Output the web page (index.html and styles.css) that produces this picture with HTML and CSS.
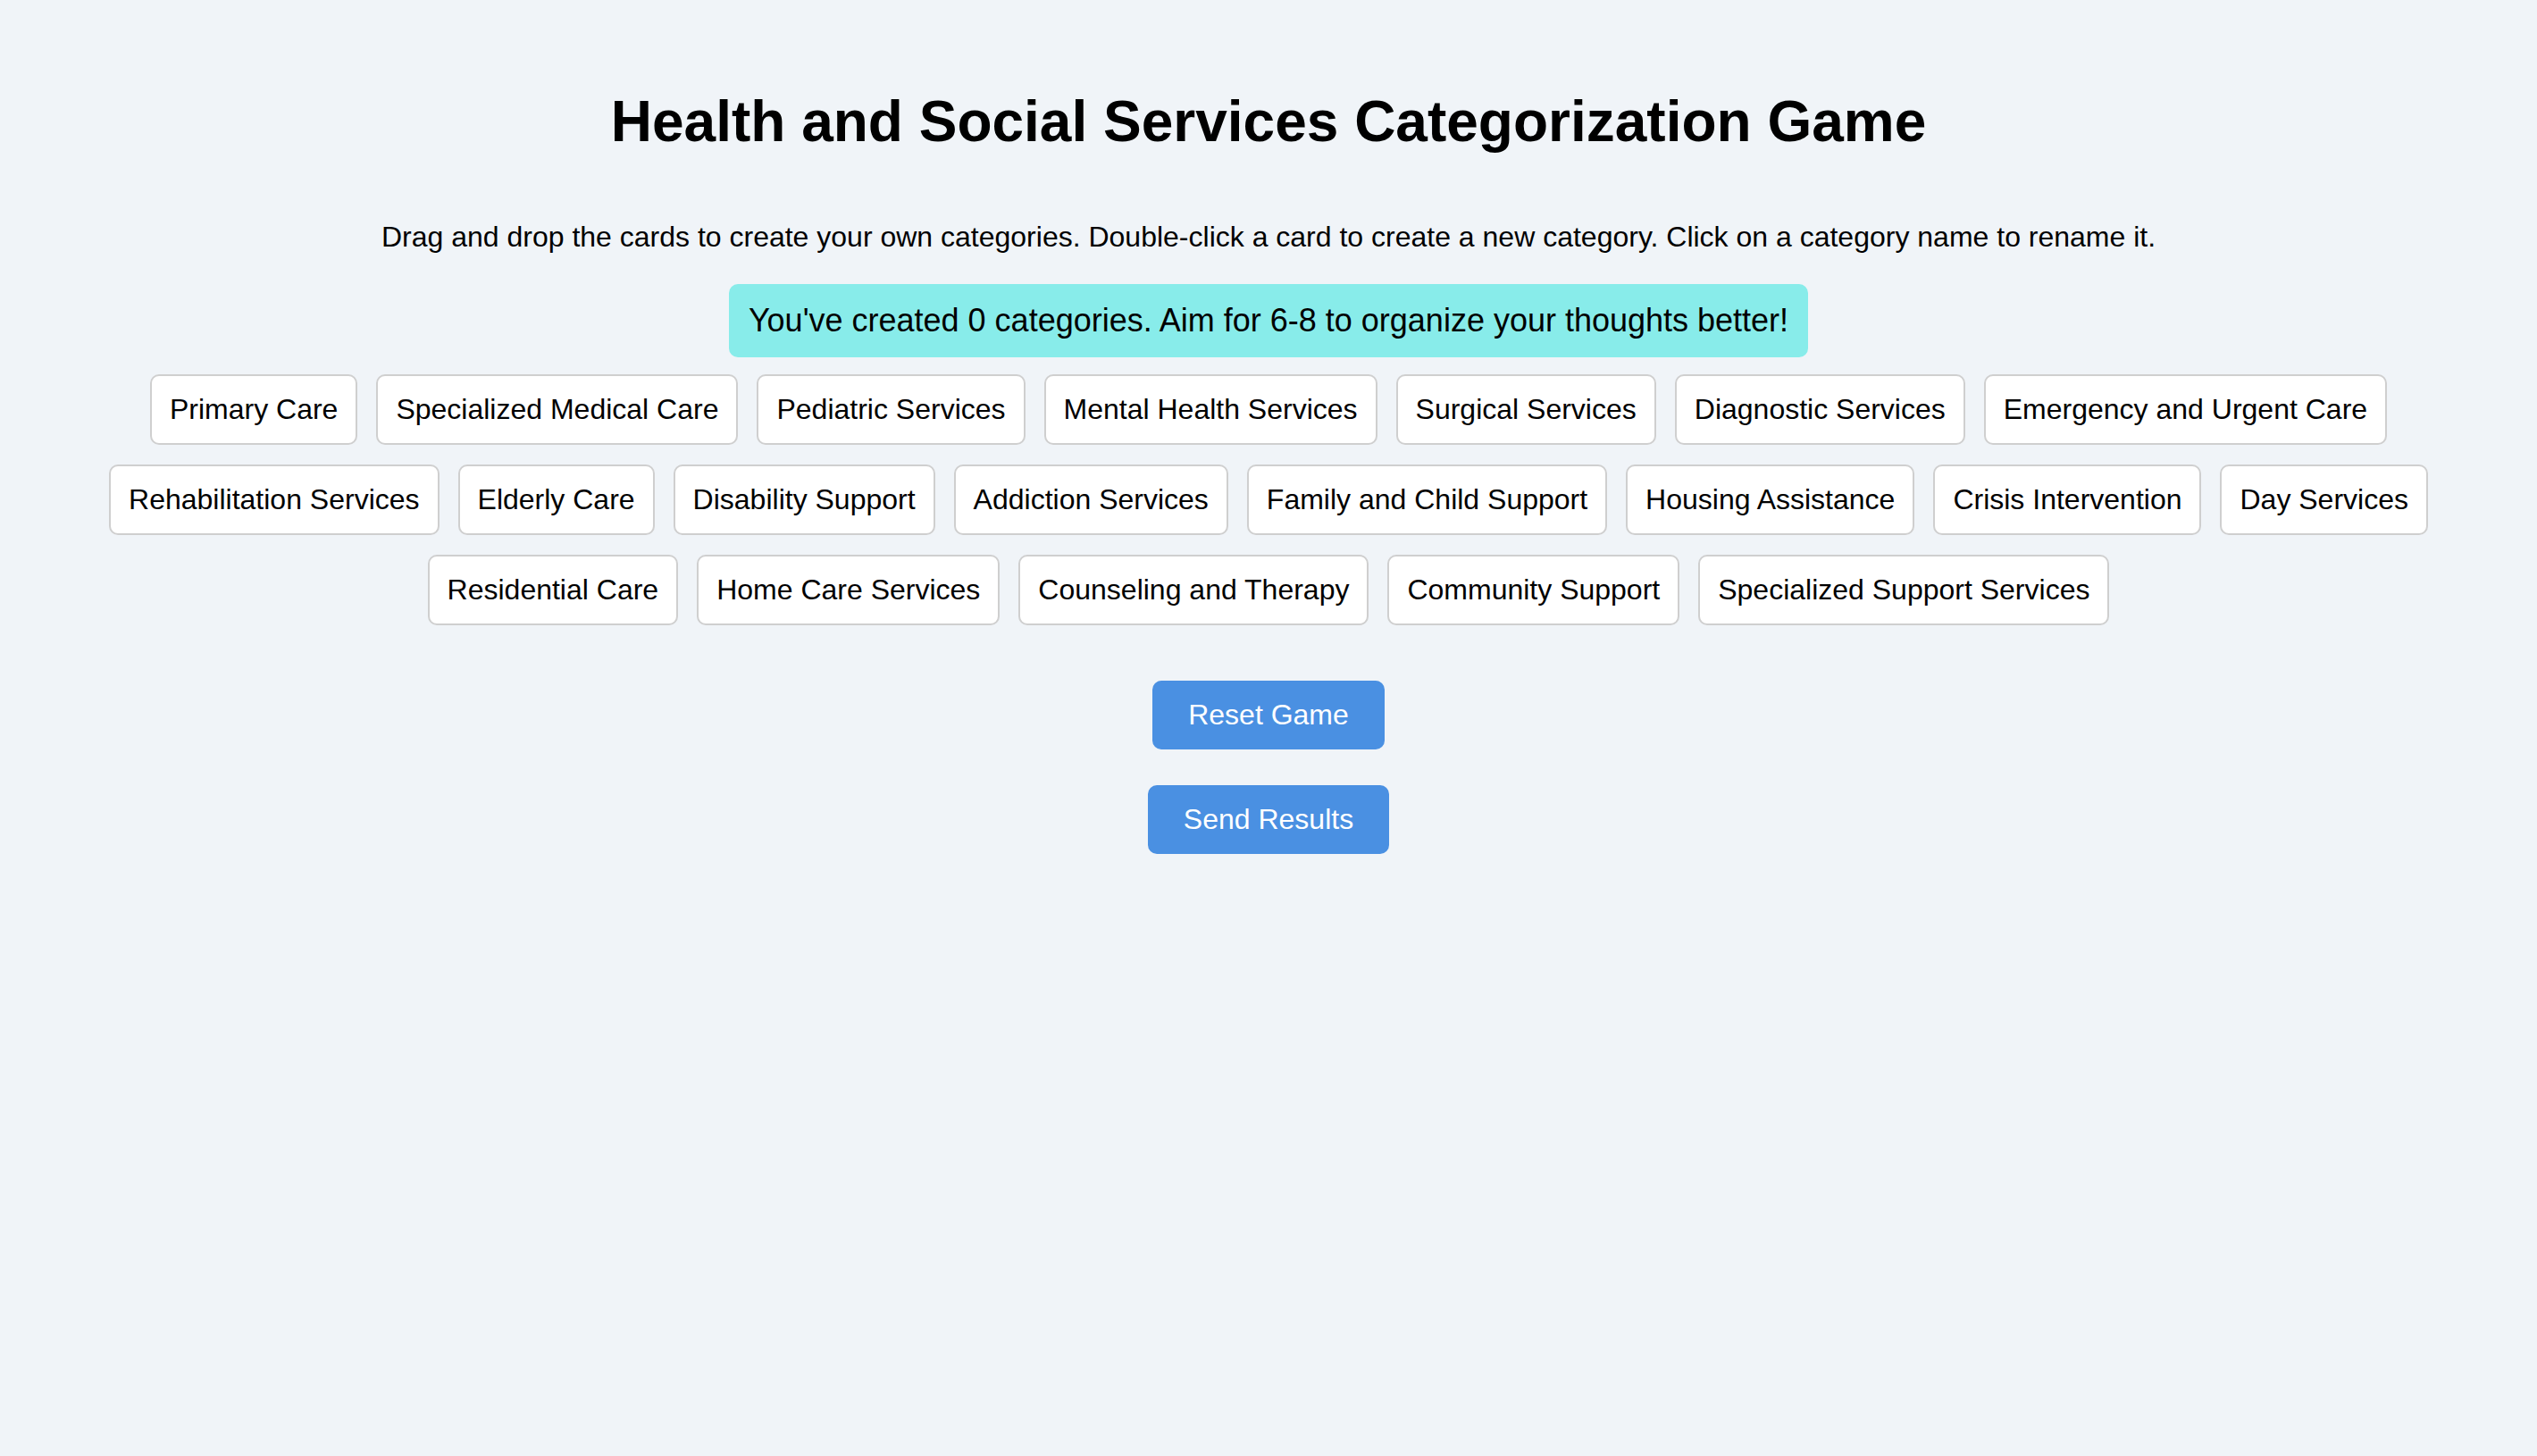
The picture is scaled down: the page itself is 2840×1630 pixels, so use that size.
FILE: index.html
```html
<!DOCTYPE html>
<html lang="en">
<head>
<meta charset="utf-8">
<title>Health and Social Services Categorization Game</title>
<link rel="stylesheet" href="styles.css">
</head>
<body>
<main class="page">
  <h1 class="title">Health and Social Services Categorization Game</h1>
  <p class="instructions">Drag and drop the cards to create your own categories. Double-click a card to create a new category. Click on a category name to rename it.</p>
  <div class="counter">You've created 0 categories. Aim for 6-8 to organize your thoughts better!</div>
  <div class="cards">
    <div class="card">Primary Care</div>
    <div class="card">Specialized Medical Care</div>
    <div class="card">Pediatric Services</div>
    <div class="card">Mental Health Services</div>
    <div class="card">Surgical Services</div>
    <div class="card">Diagnostic Services</div>
    <div class="card">Emergency and Urgent Care</div>
    <div class="card">Rehabilitation Services</div>
    <div class="card">Elderly Care</div>
    <div class="card">Disability Support</div>
    <div class="card">Addiction Services</div>
    <div class="card">Family and Child Support</div>
    <div class="card">Housing Assistance</div>
    <div class="card">Crisis Intervention</div>
    <div class="card">Day Services</div>
    <div class="card">Residential Care</div>
    <div class="card">Home Care Services</div>
    <div class="card">Counseling and Therapy</div>
    <div class="card">Community Support</div>
    <div class="card">Specialized Support Services</div>
  </div>
  <div class="actions">
    <button class="btn" type="button">Reset Game</button>
    <button class="btn" type="button">Send Results</button>
  </div>
</main>
</body>
</html>
```
FILE: styles.css
```css
html, body {
  margin: 0;
  padding: 0;
  background: #f0f4f8;
}

body {
  font-family: "Liberation Sans", Arial, Helvetica, sans-serif;
  color: #000;
}

.page {
  display: flex;
  flex-direction: column;
  align-items: center;
  padding: 40px;
}

.title {
  font-size: 64px;
  font-weight: bold;
  line-height: normal;
  margin: 59px 0 74px;
  text-align: center;
}

.instructions {
  font-size: 32px;
  line-height: normal;
  margin: 0 0 34px;
  text-align: center;
}

.counter {
  font-size: 36px;
  line-height: normal;
  padding: 20px 22px;
  background: #88ecea;
  border-radius: 10px;
}

.cards {
  align-self: stretch;
  display: flex;
  flex-wrap: wrap;
  justify-content: center;
  gap: 22px 21px;
  margin-top: 19px;
}

.card {
  font-size: 32px;
  line-height: normal;
  padding: 19px 20px;
  background: #fff;
  border: 2px solid #cfcfcf;
  border-radius: 10px;
}

.actions {
  display: flex;
  flex-direction: column;
  align-items: center;
  gap: 40px;
  margin-top: 62px;
}

.btn {
  font-family: "Liberation Sans", Arial, Helvetica, sans-serif;
  font-size: 32px;
  line-height: normal;
  padding: 20px 40px;
  color: #fff;
  background: #4a90e2;
  border: none;
  border-radius: 10px;
  cursor: pointer;
}
```
